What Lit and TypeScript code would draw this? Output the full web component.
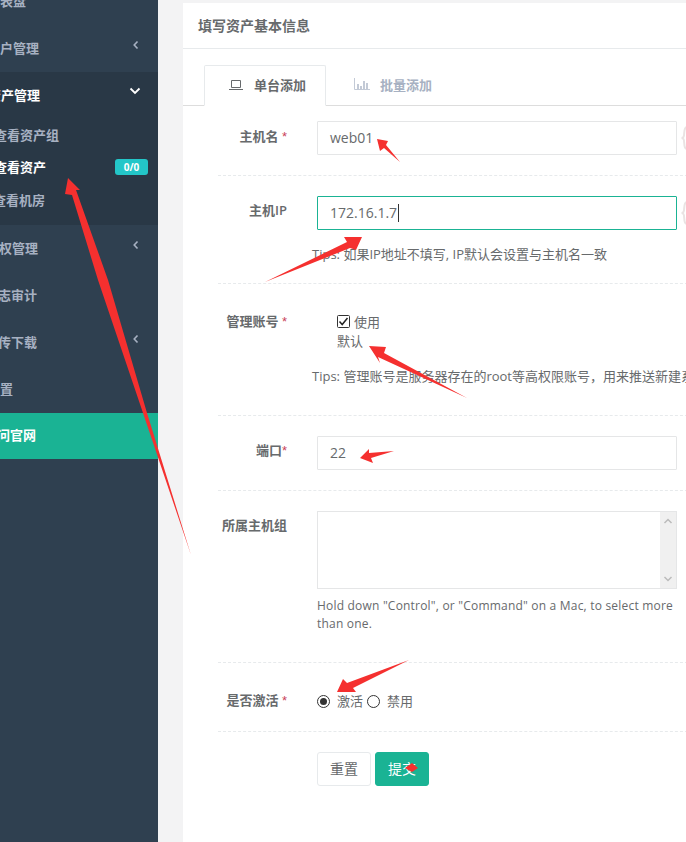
import { LitElement, html, css, svg } from "lit";
import { customElement } from "lit/decorators.js";

const chevLeft = html`<svg class="chev" width="8" height="10" viewBox="0 0 8 10"><path d="M5.5 1.5 2.2 5l3.3 3.5" fill="none" stroke="currentColor" stroke-width="1.6"/></svg>`;
const chevDown = html`<svg class="chev down" width="12" height="8" viewBox="0 0 12 8"><path d="M1.5 1.5 6 6l4.5-4.5" fill="none" stroke="currentColor" stroke-width="1.8"/></svg>`;
const brace = html`<svg class="brace" width="9" height="34" viewBox="0 0 9 34"><path d="M7 6C3 6 5 14 3.5 16 3 17 2 17 1.5 17c.5 0 1.500 0 2 1C5 20 3 28 7 28" fill="none" stroke="#e9e3e3" stroke-width="2"/></svg>`;

const arrows: string[] = [
  "377,139 388,141 386,145 400,162 384,148 380,151",
  "362,237 344,237 347,242 265,282 350,248 356,250",
  "369,346 386,347 384,353 467,398 378,357 380,363",
  "360,458 369,449 369,453 394,451 371,458 373,463",
  "68,178 80,190 76,190 108,280 147,413 191,555 143,413 98,280 72,195 65,194",
  "337,692 343,679 347,683 409,660 353,688 356,692",
  "405,768 412,763 418,768 412,772",
];

@customElement("app-root")
export class AppRoot extends LitElement {
  static styles = css`
    :host {
      display: flex;
      position: relative;
      width: 686px;
      height: 842px;
      overflow: hidden;
      background: #f3f3f4;
      color: #676a6c;
      font-family: "Open Sans", "Noto Sans CJK SC", sans-serif;
      font-size: 13px;
    }
    .side {
      flex: none;
      width: 158px;
      height: 842px;
      background: #2f4050;
      overflow: hidden;
      color: #a7b1c2;
      font-weight: 600;
    }
    .menu { margin-top: -22px; }
    .item {
      display: flex;
      align-items: center;
      justify-content: space-between;
      box-sizing: border-box;
      height: 47px;
      padding: 0 18px 2px 0;
      white-space: nowrap;
    }
    .open { background: #293846; height: 153px; }
    .open .item { color: #fff; height: 46px; }
    .sub {
      display: flex;
      align-items: center;
      justify-content: space-between;
      height: 32.5px;
      padding-right: 10px;
      white-space: nowrap;
    }
    .sub.on { color: #fff; }
    .badge {
      width: 33px;
      height: 16px;
      line-height: 16px;
      border-radius: 3px;
      background: #23c6c8;
      color: #fff;
      font-size: 10px;
      font-weight: 700;
      text-align: center;
    }
    .item.link {
      height: 46px;
      padding-bottom: 4px;
      background: #1ab394;
      color: #fff;
      font-weight: 700;
    }
    .chev { flex: none; }
    .item .chev { margin-top: -6px; }
    .item .chev.down { margin-right: -1px; margin-top: -7px; }

    .card {
      flex: none;
      width: 503px;
      height: 839px;
      margin: 3px 0 0 25px;
      background: #fff;
    }
    .title {
      height: 45px;
      line-height: 46px;
      padding-left: 15px;
      border-bottom: 1px solid #e7eaec;
      font-size: 14px;
      font-weight: 600;
    }
    .tabs {
      display: flex;
      margin-top: 16px;
      padding-left: 21px;
      height: 41px;
      box-sizing: border-box;
      border-bottom: 1px solid #ddd;
    }
    .tab {
      display: flex;
      align-items: center;
      height: 41px;
      box-sizing: border-box;
      padding-bottom: 2px;
      font-weight: 600;
    }
    .tab.active {
      width: 122px;
      padding-left: 24px;
      gap: 11px;
      background: #fff;
      border: 1px solid #e7eaec;
      border-bottom-color: #fff;
      border-radius: 2px 2px 0 0;
    }
    .tab.other {
      padding-left: 28px;
      gap: 10px;
      height: 40px;
      color: #a7b1c2;
    }
    .form { margin-left: 35px; width: 480px; }
    .row {
      display: grid;
      grid-template-columns: 69px 360px 9px;
      column-gap: 30px;
      padding: 20px 0;
      align-items: start;
    }
    .row .brace { margin-left: -27px; }
    .row.first { padding-top: 15px; }
    .row.ip { padding-bottom: 20px; }
    .row.acc { padding: 27px 0 30px; }
    .row.group { padding-bottom: 29px; }
    .row.active { padding: 28px 0 20px; }
    .row.btns { padding-top: 20px; }
    .sep { border-top: 1px dashed #e7eaec; }
    .label {
      text-align: right;
      line-height: 18px;
      padding-top: 5px;
      font-weight: 600;
      white-space: nowrap;
    }
    .first .label { padding-top: 6px; }
    .acc .label { padding-top: 1px; }
    .active .label { padding-top: 0; }
    .req {
      color: #c9425a;
      font-family: "Liberation Sans", sans-serif;
      font-weight: 400;
    }
    .input {
      box-sizing: border-box;
      height: 34px;
      line-height: 32px;
      padding-left: 12px;
      border: 1px solid #e5e6e7;
      border-radius: 1px;
      font-size: 14px;
    }
    .input.focus { border-color: #1ab394; }
    .caret {
      display: inline-block;
      width: 1px;
      height: 18px;
      background: #333;
      vertical-align: -4px;
      margin-left: 1px;
    }
    .help { line-height: 18px; font-size: 13px; }
    .help.tips { margin: 15px 0 0 -5px; white-space: nowrap; }
    .group .help { margin-top: 8px; font-size: 12px; letter-spacing: 0.2px; }
    .choice {
      display: flex;
      align-items: center;
      gap: 4px;
      height: 20px;
      padding-left: 20px;
    }
    .mgr { padding-left: 20px; line-height: 20px; }
    .acc .help.tips { margin-top: 16px; }
    .textarea {
      box-sizing: border-box;
      display: flex;
      justify-content: flex-end;
      height: 78px;
      border: 1px solid #e5e6e7;
    }
    .scroll {
      display: flex;
      flex-direction: column;
      justify-content: space-between;
      align-items: center;
      width: 16px;
      padding: 6px 0;
      box-sizing: border-box;
      background: #f0f0f0;
    }
    .radios {
      display: flex;
      align-items: center;
      gap: 3px;
      height: 20px;
    }
    .radios .gap { margin: -2px 0 0 4px; }
    .radios .gap + svg { margin-left: 1px; }
    .actions { display: flex; gap: 4px; }
    .btn {
      box-sizing: border-box;
      width: 54px;
      height: 34px;
      line-height: 32px;
      text-align: center;
      border: 1px solid #e7eaec;
      border-radius: 3px;
      font-size: 14px;
    }
    .btn.primary { background: #1ab394; border-color: #1ab394; color: #fff; }
    .marks { position: absolute; inset: 0; pointer-events: none; }
  `;

  private row(text: string, x: number) {
    return html`<span style="margin-left:${x}px">${text}</span>`;
  }

  render() {
    return html`
      <nav class="side">
        <div class="menu">
          <div class="item">${this.row("仪表盘", -13)}</div>
          <div class="item">${this.row("用户管理", -13)}${chevLeft}</div>
          <div class="open">
            <div class="item">${this.row("资产管理", -12)}${chevDown}</div>
            <div class="sub">${this.row("查看资产组", -6)}</div>
            <div class="sub on">${this.row("查看资产", -6)}<span class="badge">0/0</span></div>
            <div class="sub">${this.row("查看机房", -7)}</div>
          </div>
          <div class="item">${this.row("授权管理", -14)}${chevLeft}</div>
          <div class="item">${this.row("日志审计", -15)}</div>
          <div class="item">${this.row("上传下载", -15)}${chevLeft}</div>
          <div class="item">${this.row("设置", -13)}</div>
          <div class="item link">${this.row("访问官网", -16)}</div>
        </div>
      </nav>
      <main class="card">
        <div class="title">填写资产基本信息</div>
        <div class="tabs">
          <div class="tab active">
            <svg width="14" height="10" viewBox="0 0 14 10"><path d="M2.500 .5h9v7h-9zM0 9.500h14" fill="none" stroke="#676a6c"/></svg>
            <span>单台添加</span>
          </div>
          <div class="tab other">
            <svg width="16" height="12" viewBox="0 0 16 12"><path d="M.5 0v11.500H16" fill="none" stroke="#c3cad6"/><path d="M3 6h2v5H3zM6 8h2v3H6zM9 3h2v8H9zM12 5h2v6h-2z" fill="#c3cad6"/></svg>
            <span>批量添加</span>
          </div>
        </div>
        <div class="form">
          <div class="row first">
            <div class="label">主机名 <span class="req">*</span></div>
            <div class="input">web01</div>
            ${brace}
          </div>
          <div class="sep"></div>
          <div class="row ip">
            <div class="label">主机IP</div>
            <div>
              <div class="input focus">172.16.1.7<span class="caret"></span></div>
              <div class="help tips">Tips: 如果IP地址不填写, IP默认会设置与主机名一致</div>
            </div>
            ${brace}
          </div>
          <div class="sep"></div>
          <div class="row acc">
            <div class="label">管理账号 <span class="req">*</span></div>
            <div>
              <div class="choice">
                <svg width="13" height="13" viewBox="0 0 13 13"><rect x=".5" y=".5" width="12" height="12" rx="1" fill="#fff" stroke="#333"/><path d="M2.500 6.500 5.200 9.500 10.500 3" fill="none" stroke="#222" stroke-width="1.500"/></svg>
                <span>使用</span>
              </div>
              <div class="mgr">默认</div>
              <div class="help tips">Tips: 管理账号是服务器存在的root等高权限账号，用来推送新建系统用户</div>
            </div>
          </div>
          <div class="sep"></div>
          <div class="row">
            <div class="label">端口<span class="req">*</span></div>
            <div class="input">22</div>
          </div>
          <div class="sep"></div>
          <div class="row group">
            <div class="label">所属主机组</div>
            <div>
              <div class="textarea">
                <div class="scroll">
                  <svg width="10" height="6" viewBox="0 0 10 6"><path d="M1.500 5 5 1.500 8.500 5" fill="none" stroke="#bbb" stroke-width="1.500"/></svg>
                  <svg width="10" height="6" viewBox="0 0 10 6"><path d="M1.500 1 5 4.500 8.500 1" fill="none" stroke="#bbb" stroke-width="1.500"/></svg>
                </div>
              </div>
              <div class="help">Hold down "Control", or "Command" on a Mac, to select more than one.</div>
            </div>
          </div>
          <div class="sep"></div>
          <div class="row active">
            <div class="label">是否激活 <span class="req">*</span></div>
            <div class="radios">
              <svg width="13" height="13" viewBox="0 0 13 13"><circle cx="6.500" cy="6.500" r="6" fill="#fff" stroke="#333"/><circle cx="6.500" cy="6.500" r="3.500" fill="#333"/></svg>
              <span class="gap">激活</span>
              <svg width="13" height="13" viewBox="0 0 13 13"><circle cx="6.500" cy="6.500" r="6" fill="#fff" stroke="#333"/></svg>
              <span class="gap">禁用</span>
            </div>
          </div>
          <div class="sep"></div>
          <div class="row btns">
            <div></div>
            <div class="actions">
              <div class="btn">重置</div>
              <div class="btn primary">提交</div>
            </div>
          </div>
        </div>
      </main>
      <svg class="marks" width="686" height="842" viewBox="0 0 686 842">
        ${arrows.map((p) => svg`<polygon points=${p} fill="#f5302f"/>`)}
      </svg>
    `;
  }
}
